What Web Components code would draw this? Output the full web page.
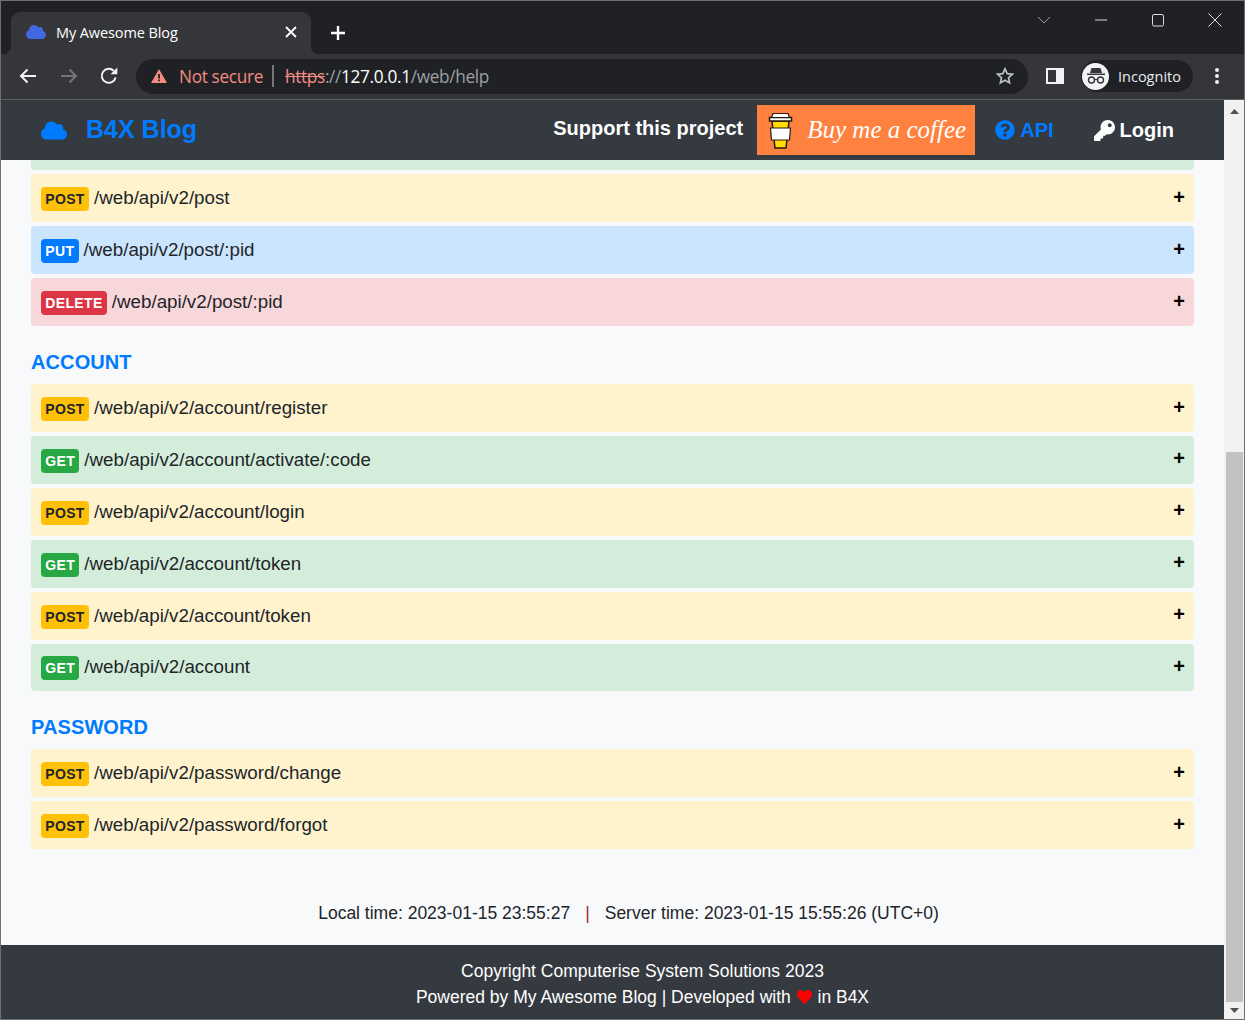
<!DOCTYPE html>
<html>
<head>
<meta charset="utf-8">
<title>My Awesome Blog</title>
<style>
    html, body { margin: 0; padding: 0; height: 100%; overflow: hidden; background: #6f6f6f; }
    body { font-family: "Liberation Sans", Arial, sans-serif; }
</style>
</head>
<body>
<browser-window>
    <browser-tabs slot="chrome"></browser-tabs>
    <browser-toolbar slot="chrome"></browser-toolbar>
    <site-navbar slot="nav"></site-navbar>

    <api-row method="GET" sliver></api-row>
    <api-row method="POST" path="/web/api/v2/post"></api-row>
    <api-row method="PUT" path="/web/api/v2/post/:pid"></api-row>
    <api-row method="DELETE" path="/web/api/v2/post/:pid"></api-row>

    <api-section title="ACCOUNT">
        <api-row method="POST" path="/web/api/v2/account/register"></api-row>
        <api-row method="GET" path="/web/api/v2/account/activate/:code"></api-row>
        <api-row method="POST" path="/web/api/v2/account/login"></api-row>
        <api-row method="GET" path="/web/api/v2/account/token"></api-row>
        <api-row method="POST" path="/web/api/v2/account/token"></api-row>
        <api-row method="GET" path="/web/api/v2/account"></api-row>
    </api-section>

    <api-section title="PASSWORD">
        <api-row method="POST" path="/web/api/v2/password/change"></api-row>
        <api-row method="POST" path="/web/api/v2/password/forgot"></api-row>
    </api-section>

    <time-bar></time-bar>
    <site-footer slot="footer"></site-footer>
</browser-window>

<script>
// icones (viewBox 640/512)
const CLOUD = "M537.6 226.6c4.1-10.7 6.4-22.4 6.4-34.6 0-53-43-96-96-96-19.7 0-38.1 6-53.3 16.2C367 64.2 315.3 32 256 32c-88.4 0-160 71.6-160 160 0 2.7.1 5.4.2 8.1C40.2 219.8 0 273.2 0 336c0 79.5 64.5 144 144 144h368c70.7 0 128-57.3 128-128 0-61.9-44-113.6-102.4-125.4z";
const QUESTION = "M504 256c0 136.997-111.043 248-248 248S8 392.997 8 256C8 119.083 119.043 8 256 8s248 111.083 248 248zM262.655 90c-54.497 0-89.255 22.957-116.549 63.758-3.536 5.286-2.353 12.415 2.715 16.258l34.699 26.31c5.205 3.947 12.621 3.008 16.665-2.122 17.864-22.658 30.113-35.797 57.303-35.797 20.429 0 45.698 13.148 45.698 32.958 0 14.976-12.363 22.667-32.534 33.976C247.128 238.528 216 254.941 216 296v4c0 6.627 5.373 12 12 12h56c6.627 0 12-5.373 12-12v-1.333c0-28.462 83.186-29.647 83.186-106.667 0-58.002-60.165-102-116.531-102zM256 338c-25.365 0-46 20.635-46 46 0 25.364 20.635 46 46 46s46-20.636 46-46c0-25.365-20.635-46-46-46z";
const KEY = "M512 176.001C512 273.203 433.202 352 336 352c-11.22 0-22.19-1.062-32.827-3.069l-24.012 27.014A23.999 23.999 0 0 1 261.223 384H224v40c0 13.255-10.745 24-24 24h-40v40c0 13.255-10.745 24-24 24H24c-13.255 0-24-10.745-24-24v-78.059c0-6.365 2.529-12.47 7.029-16.971l161.802-161.802C163.108 213.814 160 195.271 160 176 160 78.798 238.797.001 335.999 0 433.488-.001 512 78.511 512 176.001zM336 128c0 26.51 21.49 48 48 48s48-21.49 48-48-21.49-48-48-48-48 21.49-48 48z";
const HEART = "M462.3 62.6C407.5 15.9 326 24.3 275.7 76.2L256 96.5l-19.7-20.3C186.1 24.3 104.5 15.9 49.7 62.6c-62.8 53.6-66.1 149.8-9.9 207.9l193.5 199.8c12.5 12.9 32.8 12.9 45.3 0l193.5-199.8c56.3-58.1 53-154.3-9.8-207.9z";

// JANELA
class BrowserWindow extends HTMLElement {
    constructor() {
        super();
        this.attachShadow({ mode: "open" });
        this.shadowRoot.innerHTML = `
            <style>
                :host {
                    display: flex;
                    flex-direction: column;
                    box-sizing: border-box;
                    width: 1245px;
                    height: 1020px;
                    padding: 1px;
                    background: #6f6f6f;
                    overflow: hidden;
                }
                .viewport { flex: 1; display: flex; min-height: 0; }
                .page { flex: 1; display: flex; flex-direction: column; min-width: 0; background: #f8f9fa; }
                main { flex: 1; display: flex; flex-direction: column; gap: 4px; padding: 0 30px; min-height: 0; }
                .track { width: 20px; background: #f1f1f1; display: flex; flex-direction: column; align-items: center; padding-left: 1px; box-sizing: border-box; }
                .arrow { height: 17px; display: flex; align-items: center; justify-content: center; flex: none; }
                .arrow.top { height: 23px; }
                .spacer { height: 329px; flex: none; }
                .thumb { width: 17px; flex: 1; background: #c1c1c1; }
            </style>
            <slot name="chrome"></slot>
            <div class="viewport">
                <div class="page">
                    <slot name="nav"></slot>
                    <main><slot></slot></main>
                    <slot name="footer"></slot>
                </div>
                <div class="track">
                    <div class="arrow top"><svg width="9" height="5" viewBox="0 0 9 5"><path d="M4.5 0L9 5H0z" fill="#505050"/></svg></div>
                    <div class="spacer"></div>
                    <div class="thumb"></div>
                    <div class="arrow"><svg width="9" height="5" viewBox="0 0 9 5"><path d="M0 0h9L4.5 5z" fill="#505050"/></svg></div>
                </div>
            </div>
        `;
    }
}
customElements.define("browser-window", BrowserWindow);

// ABAS
class BrowserTabs extends HTMLElement {
    constructor() {
        super();
        this.attachShadow({ mode: "open" });
        this.shadowRoot.innerHTML = `
            <style>
                :host {
                    display: flex;
                    align-items: flex-end;
                    height: 53px;
                    background: #202124;
                    color: #fff;
                    font-family: "Open Sans", sans-serif;
                }
                .tab {
                    position: relative;
                    margin-left: 10px;
                    width: 300px;
                    height: 42px;
                    box-sizing: border-box;
                    background: #35363a;
                    border-radius: 9px 9px 0 0;
                    display: flex;
                    align-items: center;
                    padding: 0 14px 2px 15px;
                    font-size: 14.5px;
                    letter-spacing: -0.1px;
                }
                .tab::before, .tab::after {
                    content: "";
                    position: absolute;
                    bottom: 0;
                    width: 8px;
                    height: 8px;
                }
                .tab::before { left: -8px; background: radial-gradient(circle at 0 0, transparent 8px, #35363a 8.5px); }
                .tab::after { right: -8px; background: radial-gradient(circle at 100% 0, transparent 8px, #35363a 8.5px); }
                .fav { margin-right: 10px; flex: none; }
                .title { flex: 1; white-space: nowrap; }
                .new { margin: 0 0 13px 19px; flex: none; }
                .controls { margin-left: auto; align-self: flex-start; display: flex; align-items: center; height: 38px; padding-right: 22px; gap: 43px; }
            </style>
            <div class="tab">
                <svg class="fav" width="20" height="16" viewBox="0 0 640 512"><path fill="#4169e1" d="${CLOUD}"/></svg>
                <span class="title">My Awesome Blog</span>
                <svg width="12" height="12" viewBox="0 0 12 12"><path d="M1 1l10 10M11 1L1 11" stroke="#fff" stroke-width="1.8"/></svg>
            </div>
            <svg class="new" width="16" height="16" viewBox="0 0 16 16"><path d="M8 1v14M1 8h14" stroke="#fff" stroke-width="2.4"/></svg>
            <div class="controls">
                <svg width="14" height="8" viewBox="0 0 14 8"><path d="M1 1l6 6 6-6" fill="none" stroke="#9a9b9e" stroke-width="1"/></svg>
                <svg width="14" height="14" viewBox="0 0 14 14"><path d="M1 7h12" stroke="#dcdcdc" stroke-width="1"/></svg>
                <svg width="14" height="14" viewBox="0 0 14 14"><rect x="1.5" y="1.5" width="11" height="11.5" rx="1.5" fill="none" stroke="#dcdcdc" stroke-width="1"/></svg>
                <svg width="14" height="14" viewBox="0 0 14 14"><path d="M.5 .5l13 13M13.5 .5l-13 13" stroke="#dcdcdc" stroke-width="1"/></svg>
            </div>
        `;
    }
}
customElements.define("browser-tabs", BrowserTabs);

// BARRA DE ENDERECO
class BrowserToolbar extends HTMLElement {
    constructor() {
        super();
        this.attachShadow({ mode: "open" });
        this.shadowRoot.innerHTML = `
            <style>
                :host {
                    display: flex;
                    align-items: center;
                    box-sizing: border-box;
                    height: 46px;
                    padding: 0 16px 1px 18px;
                    background: #35363a;
                    border-bottom: 1px solid #5c5d60;
                    font-family: "Open Sans", sans-serif;
                }
                .nav { display: flex; align-items: center; gap: 22.5px; margin-right: 18px; }
                .omni {
                    width: 892px;
                    height: 35px;
                    box-sizing: border-box;
                    background: #202124;
                    border-radius: 18px;
                    display: flex;
                    align-items: center;
                    padding: 0 14px 0 15px;
                    font-size: 17.25px;
                    letter-spacing: -0.35px;
                    white-space: nowrap;
                }
                .warn { color: #f28b82; margin-left: 12px; }
                .sep { width: 2px; height: 22px; background: #75767a; margin: 0 11px 0 9px; }
                .scheme { color: #f28b82; text-decoration: line-through; }
                .dim { color: #9aa0a6; }
                .host { color: #fff; }
                .star { margin-left: auto; }
                .side { margin: 0 0 0 18px; }
                .profile {
                    margin-left: 17px;
                    width: 112px;
                    height: 32px;
                    box-sizing: border-box;
                    border-radius: 16px;
                    background: #202124;
                    display: flex;
                    align-items: center;
                    color: #e8eaed;
                    font-size: 14.5px;
                    letter-spacing: 0;
                    padding-left: 1px;
                    gap: 9px;
                }
                .avatar { width: 27px; height: 27px; border-radius: 50%; background: #f1f3f4; display: flex; align-items: center; justify-content: center; }
                .menu { margin-left: 22px; }
            </style>
            <div class="nav">
                <svg width="18" height="16" viewBox="0 0 18 16"><path d="M17 8H2M8.5 1.5L2 8l6.5 6.5" fill="none" stroke="#f1f3f4" stroke-width="2"/></svg>
                <svg width="18" height="16" viewBox="0 0 18 16"><path d="M1 8h15M9.5 1.5L16 8l-6.5 6.5" fill="none" stroke="#75767a" stroke-width="2"/></svg>
                <svg width="18" height="18" viewBox="0 0 18 18"><path d="M15.6 10.5A7 7 0 1 1 13.8 3.9" fill="none" stroke="#f1f3f4" stroke-width="2"/><path d="M10.5 7.2h6.8V.4z" fill="#f1f3f4"/></svg>
            </div>
            <div class="omni">
                <svg width="16" height="14" viewBox="0 0 16 14"><path d="M8 0l8 14H0z" fill="#f28b82"/><path d="M7.1 5h1.8v4.5H7.1zM7.1 10.5h1.8v1.7H7.1z" fill="#202124"/></svg>
                <span class="warn">Not secure</span>
                <span class="sep"></span>
                <span class="scheme">https</span><span class="dim">://</span><span class="host">127.0.0.1</span><span class="dim">/web/help</span>
                <svg class="star" width="18" height="18" viewBox="0 0 18 18"><path d="M9 1.8l2.2 4.8 5.2.6-3.9 3.5 1.1 5.2L9 13.3l-4.6 2.6 1.1-5.2L1.6 7.2l5.2-.6z" fill="none" stroke="#bdc1c6" stroke-width="1.7"/></svg>
            </div>
            <svg class="side" width="18" height="18" viewBox="0 0 18 18"><path fill-rule="evenodd" d="M0 1h18v16H0zM2 3v12h8V3z" fill="#f1f3f4"/></svg>
            <div class="profile">
                <span class="avatar"><svg width="20" height="18" viewBox="0 0 20 18"><path d="M5.5 1h9l1.5 5H4zM1 6.5h18V8H1z" fill="#35363a"/><circle cx="5.5" cy="13" r="3" fill="none" stroke="#35363a" stroke-width="1.4"/><circle cx="14.5" cy="13" r="3" fill="none" stroke="#35363a" stroke-width="1.4"/><path d="M8.5 12.5h3" stroke="#35363a" stroke-width="1.2"/></svg></span>
                <span>Incognito</span>
            </div>
            <svg class="menu" width="4" height="16" viewBox="0 0 4 16"><circle cx="2" cy="2" r="2" fill="#f1f3f4"/><circle cx="2" cy="8" r="2" fill="#f1f3f4"/><circle cx="2" cy="14" r="2" fill="#f1f3f4"/></svg>
        `;
    }
}
customElements.define("browser-toolbar", BrowserToolbar);

// NAVBAR DO SITE
class SiteNavbar extends HTMLElement {
    constructor() {
        super();
        this.attachShadow({ mode: "open" });
        this.shadowRoot.innerHTML = `
            <style>
                :host {
                    display: flex;
                    align-items: center;
                    flex: none;
                    height: 60px;
                    box-sizing: border-box;
                    padding: 0 50px 0 40px;
                    background: #343a40;
                    color: #fff;
                    font-weight: bold;
                    white-space: nowrap;
                }
                svg { flex: none; }
                .brand { color: #007bff; font-size: 25px; margin-left: 19px; position: relative; top: -1px; }
                .support { margin-left: auto; font-size: 20px; position: relative; top: -2px; }
                .coffee {
                    margin-left: 14px;
                    width: 218px;
                    height: 50px;
                    background: #ff813f;
                    display: flex;
                    align-items: center;
                    box-sizing: border-box;
                    padding-left: 11px;
                    color: #fff;
                    font-family: "Liberation Serif", serif;
                    font-style: italic;
                    font-weight: normal;
                    font-size: 25px;
                }
                .coffee span { margin-left: 14px; white-space: nowrap; }
                .link { display: flex; align-items: center; gap: 5px; font-size: 20px; }
                .api { color: #007bff; margin-left: 20px; }
                .login { margin-left: 40px; }
            </style>
            <svg width="26" height="21" viewBox="0 0 640 512"><path fill="#007bff" d="${CLOUD}"/></svg>
            <span class="brand">B4X Blog</span>
            <span class="support">Support this project</span>
            <div class="coffee">
                <svg width="25" height="37" viewBox="0 0 25 37">
                    <path d="M4 9h17l-3 27H7z" fill="#ffdd00" stroke="#2a1a10" stroke-width="1.5"/>
                    <path d="M2.5 16h20l-1 12H3.5z" fill="#fff" stroke="#2a1a10" stroke-width="1.2"/>
                    <path d="M1.5 5.5h22V9h-22z" fill="#fff" stroke="#2a1a10" stroke-width="1.5"/>
                    <path d="M5 1.5h15l1.5 4h-18z" fill="#fff" stroke="#2a1a10" stroke-width="1.2"/>
                </svg>
                <span>Buy me a coffee</span>
            </div>
            <span class="link api">
                <svg width="20" height="20" viewBox="0 0 512 512"><path fill="#007bff" d="${QUESTION}"/></svg>API
            </span>
            <span class="link login">
                <svg width="21" height="21" viewBox="0 0 512 512"><path fill="#fff" d="${KEY}"/></svg>Login
            </span>
        `;
    }
}
customElements.define("site-navbar", SiteNavbar);

// LINHA DE ENDPOINT
class ApiRow extends HTMLElement {
    static cores = {
        GET: { fundo: "#d4edda", selo: "#28a745", texto: "#fff" },
        POST: { fundo: "#fff3cd", selo: "#ffc107", texto: "#212529" },
        PUT: { fundo: "#cce5ff", selo: "#007bff", texto: "#fff" },
        DELETE: { fundo: "#f8d7da", selo: "#dc3545", texto: "#fff" }
    };

    constructor() {
        super();
        this.attachShadow({ mode: "open" });
    }

    connectedCallback() {
        const metodo = this.getAttribute("method");
        const cor = ApiRow.cores[metodo];
        const sliver = this.hasAttribute("sliver");
        this.shadowRoot.innerHTML = `
            <style>
                :host {
                    display: flex;
                    align-items: center;
                    flex: none;
                    height: ${sliver ? "10.4px" : "47.9px"};
                    box-sizing: border-box;
                    padding: 0 9px 0 10px;
                    background: ${cor.fundo};
                    border-radius: ${sliver ? "0 0 4px 4px" : "4px"};
                    color: #212529;
                    font-size: 18.75px;
                }
                .selo {
                    display: inline-flex;
                    align-items: center;
                    height: 24px;
                    padding: 0 4.25px;
                    margin-right: 5px;
                    border-radius: 4px;
                    background: ${cor.selo};
                    color: ${cor.texto};
                    font-size: 14px;
                    font-weight: bold;
                    letter-spacing: 0.35px;
                    position: relative;
                    top: 1px;
                }
                .mais { margin-left: auto; font-weight: bold; font-size: 20px; color: #000; position: relative; top: -1px; }
            </style>
            ${sliver ? "" : `<span class="selo">${metodo}</span><span>${this.getAttribute("path")}</span><span class="mais">+</span>`}
        `;
    }
}
customElements.define("api-row", ApiRow);

// SECAO
class ApiSection extends HTMLElement {
    constructor() {
        super();
        this.attachShadow({ mode: "open" });
    }

    connectedCallback() {
        this.shadowRoot.innerHTML = `
            <style>
                :host { display: flex; flex-direction: column; gap: 4px; flex: none; }
                h2 {
                    margin: 20px 0 6px;
                    height: 24px;
                    line-height: 24px;
                    color: #007bff;
                    font-size: 20px;
                    font-weight: bold;
                    letter-spacing: 0.1px;
                }
            </style>
            <h2>${this.getAttribute("title")}</h2>
            <slot></slot>
        `;
    }
}
customElements.define("api-section", ApiSection);

// HORA
class TimeBar extends HTMLElement {
    constructor() {
        super();
        this.attachShadow({ mode: "open" });
        this.shadowRoot.innerHTML = `
            <style>
                :host {
                    display: flex;
                    justify-content: center;
                    margin-top: auto;
                    padding: 0 0 21px 32px;
                    color: #212529;
                    font-size: 17.5px;
                    white-space: pre;
                }
                .sep { color: #a02a35; margin: 0 15px; }
            </style>
            <span>Local time: 2023-01-15 23:55:27</span><span class="sep">|</span><span>Server time: 2023-01-15 15:55:26 (UTC+0)</span>
        `;
    }
}
customElements.define("time-bar", TimeBar);

// RODAPE
class SiteFooter extends HTMLElement {
    constructor() {
        super();
        this.attachShadow({ mode: "open" });
        this.shadowRoot.innerHTML = `
            <style>
                :host {
                    display: block;
                    flex: none;
                    height: 74px;
                    box-sizing: border-box;
                    padding: 13px 0 0 60px;
                    background: #343a40;
                    color: #fff;
                    font-size: 17.5px;
                    line-height: 26px;
                    text-align: center;
                }
                svg { vertical-align: -2px; margin: 0 1px; }
            </style>
            <div>Copyright Computerise System Solutions 2023</div>
            <div>Powered by My Awesome Blog | Developed with <svg width="15" height="16" viewBox="0 0 512 512" preserveAspectRatio="none"><path fill="#f00" d="${HEART}"/></svg> in B4X</div>
        `;
    }
}
customElements.define("site-footer", SiteFooter);
</script>
</body>
</html>
